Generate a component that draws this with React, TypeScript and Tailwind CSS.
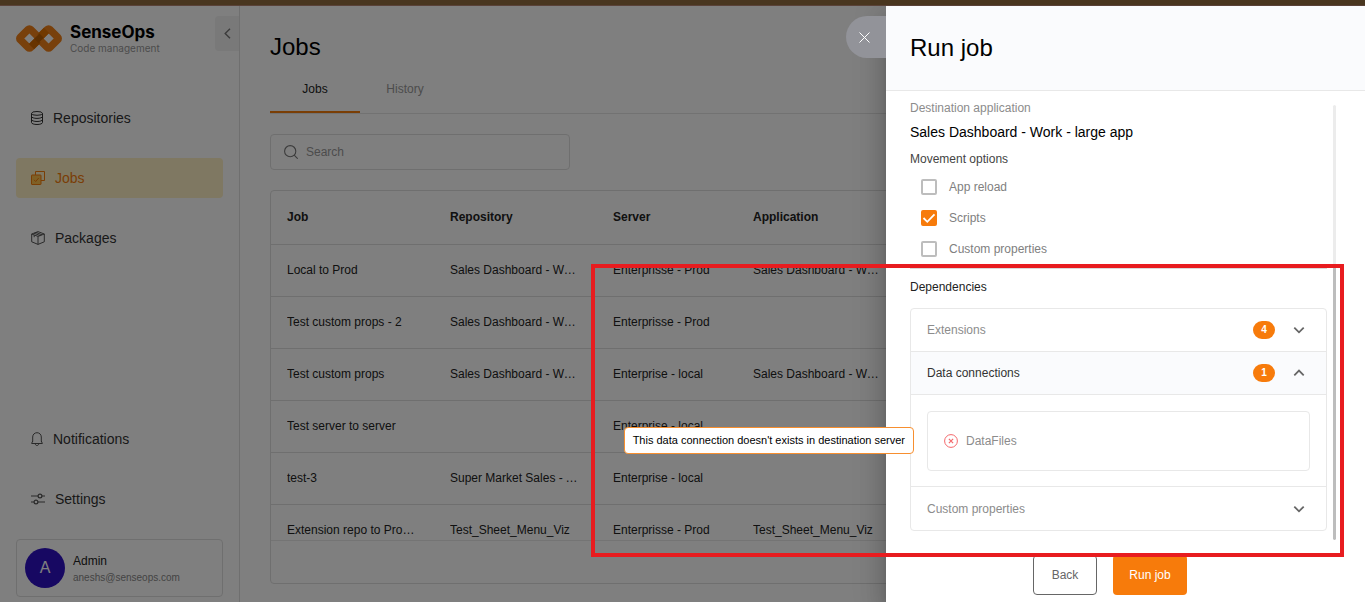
import { useState } from 'react'
import type { ReactNode } from 'react'
import { clsx } from 'clsx'

const jobs = [
  { name: 'Local to Prod', repository: 'Sales Dashboard - Work', server: 'Enterprisse - Prod', application: 'Sales Dashboard - Work' },
  { name: 'Test custom props - 2', repository: 'Sales Dashboard - Work', server: 'Enterprisse - Prod', application: '' },
  { name: 'Test custom props', repository: 'Sales Dashboard - Work', server: 'Enterprise - local', application: 'Sales Dashboard - Work' },
  { name: 'Test server to server', repository: '', server: 'Enterprise - local', application: '' },
  { name: 'test-3', repository: 'Super Market Sales - App', server: 'Enterprise - local', application: '' },
  { name: 'Extension repo to Production', repository: 'Test_Sheet_Menu_Viz', server: 'Enterprisse - Prod', application: 'Test_Sheet_Menu_Viz' },
]

function Logo() {
  return (
    <svg width="46" height="27" viewBox="0 0 46 27" fill="none" strokeWidth="7.4">
      <rect x="6.100" y="6.200" width="14.600" height="14.600" rx="1.600" transform="rotate(45 13.400 13.500)" stroke="#f08018" />
      <rect x="25.300" y="6.200" width="14.600" height="14.600" rx="1.600" transform="rotate(45 32.600 13.500)" stroke="#f08018" />
      <path d="M15.500 21.700 22 15.200" stroke="#d06800" />
      <path d="M24 11.800 30.500 5.300" stroke="#e27200" />
      <path d="M20.900 11.200 25.100 15.400" stroke="#bd5e00" />
    </svg>
  )
}

function DatabaseIcon() {
  return (
    <svg width="12" height="14" viewBox="0 0 12 14" fill="none" stroke="currentColor">
      <ellipse cx="6" cy="2.400" rx="5.500" ry="1.900" />
      <path d="M.5 2.400v9.200c0 1 2.500 1.900 5.500 1.900s5.500-.9 5.500-1.900V2.400M.5 5.500c0 1 2.500 1.900 5.500 1.900s5.500-.9 5.500-1.900M.5 8.600c0 1 2.500 1.900 5.500 1.900s5.500-.9 5.500-1.900" />
    </svg>
  )
}

function JobsIcon() {
  return (
    <svg width="14" height="14" viewBox="0 0 14 14" fill="none" stroke="#f57c0a">
      <path d="M4.500 4V.5h9v9H10" />
      <rect x=".5" y="4" width="9.500" height="9.500" rx=".5" fill="#ffc04d" />
      <path d="m3 8.800 1.700 1.700L7.700 7" />
    </svg>
  )
}

function PackageIcon() {
  return (
    <svg width="14" height="14" viewBox="0 0 14 14" fill="none" stroke="#555" strokeLinejoin="round">
      <path d="M7 .6 13.300 3v7.800L7 13.400.7 10.800V3zM.7 3 7 5.400 13.300 3M7 5.400v8M3 2.200l6.200 2.400M5 1.400l6 2.400M3.200 4v2.200" />
    </svg>
  )
}

function BellIcon() {
  return (
    <svg width="12" height="14" viewBox="0 0 12 14" fill="none" stroke="#555">
      <path d="M.5 11.500h11M1.700 9.500V5C1.700 2.500 3.600.7 6 .7S10.300 2.500 10.300 5v4.500M1.700 9 .7 11.300M10.300 9l1 2.300M4.300 12c.2 1 .8 1.500 1.700 1.500S7.500 13 7.700 12" />
    </svg>
  )
}

function SettingsIcon() {
  return (
    <svg width="14" height="14" viewBox="0 0 14 14" fill="none" stroke="#555" strokeWidth="1.200">
      <path d="M0 4h7M11 4h3M0 10h3M7 10h7" />
      <circle cx="9" cy="4" r="1.900" />
      <circle cx="5" cy="10" r="1.900" />
    </svg>
  )
}

function Chevron({ up }: { up?: boolean }) {
  return (
    <svg width="12" height="8" viewBox="0 0 12 8" fill="none" stroke="#666" strokeWidth="1.800">
      <path d={up ? 'M1.300 6.300 6 1.600l4.700 4.700' : 'M1.300 1.600 6 6.300l4.700-4.700'} />
    </svg>
  )
}

function NavItem({ icon, label, active }: { icon: ReactNode; label: string; active?: boolean }) {
  return (
    <a
      href="#"
      className={clsx(
        'flex h-10 items-center gap-[10px] rounded px-[15px] text-sm',
        active ? 'bg-[#fff0c4] text-[#f57c0a]' : 'text-[#333]',
      )}
    >
      {icon}
      {label}
    </a>
  )
}

function Sidebar() {
  return (
    <aside className="flex w-60 shrink-0 flex-col border-r border-[#dedede] pb-[5px] pl-4">
      <div className="flex items-start justify-between pt-[10px]">
        <div className="flex items-center gap-2 pt-[6px]">
          <Logo />
          <div className="font-['Inter']">
            <div className="text-[17px] leading-5 font-bold text-black">SenseOps</div>
            <div className="text-[10px] leading-3 text-[#999]">Code management</div>
          </div>
        </div>
        <button aria-label="Collapse menu" className="flex h-[35px] w-6 items-center justify-center rounded-l bg-[#f2f2f2]">
          <svg width="7" height="11" viewBox="0 0 7 11" fill="none" stroke="#777" strokeWidth="1.400">
            <path d="M6 .8 1.200 5.500 6 10.200" />
          </svg>
        </button>
      </div>
      <nav className="mt-11 mr-4 flex flex-1 flex-col gap-5">
        <NavItem icon={<DatabaseIcon />} label="Repositories" />
        <NavItem icon={<JobsIcon />} label="Jobs" active />
        <NavItem icon={<PackageIcon />} label="Packages" />
        <div className="mt-auto flex flex-col gap-5">
          <NavItem icon={<BellIcon />} label="Notifications" />
          <NavItem icon={<SettingsIcon />} label="Settings" />
        </div>
      </nav>
      <div className="mt-5 mr-4 flex h-[58px] items-center gap-2 rounded border border-[#dedede] px-2">
        <div className="flex size-10 items-center justify-center rounded-full bg-[#2e10c4] text-base text-white">A</div>
        <div className="pt-[3px]">
          <div className="text-xs leading-4 text-[#222]">Admin</div>
          <div className="text-[10px] leading-[18px] text-[#888]">aneshs@senseops.com</div>
        </div>
      </div>
    </aside>
  )
}

function JobsPage() {
  return (
    <main className="flex min-w-0 flex-1 flex-col px-[30px] pb-[18px]">
      <h1 className="mt-[25px] text-2xl text-black">Jobs</h1>
      <div className="mt-[3px] flex h-12 border-b border-[#e4e4e4]" role="tablist">
        <button role="tab" aria-selected="true" className="h-[47px] w-[90px] border-b-2 border-[#f57c0a] text-xs text-[#222]">
          Jobs
        </button>
        <button role="tab" aria-selected="false" className="h-[47px] w-[90px] border-b-2 border-transparent text-xs text-[#999]">
          History
        </button>
      </div>
      <label className="mt-5 flex h-9 w-[300px] items-center gap-2 rounded border border-[#dedede] px-[13px]">
        <svg width="14" height="14" viewBox="0 0 14 14" fill="none" stroke="#777" strokeWidth="1.100">
          <circle cx="6.200" cy="6.200" r="5.600" />
          <path d="m10.200 10.200 3.500 3.500" />
        </svg>
        <input aria-label="Search" placeholder="Search" className="min-w-0 flex-1 bg-transparent text-xs outline-none placeholder:text-[#999]" />
      </label>
      <div className="mt-5 flex min-h-0 flex-1 flex-col rounded border border-[#dedede]">
        <div className="min-h-0 flex-1 overflow-hidden">
          <table className="w-full table-fixed border-separate border-spacing-0 text-left text-xs text-[#222]">
            <colgroup>
              <col className="w-[163px]" />
              <col className="w-[163px]" />
              <col className="w-[140px]" />
              <col />
            </colgroup>
            <thead>
              <tr className="h-[54px]">
                {['Job', 'Repository', 'Server', 'Application'].map(title => (
                  <th key={title} className="border-b border-[#dedede] px-4 pb-[2px] font-bold">{title}</th>
                ))}
              </tr>
            </thead>
            <tbody>
              {jobs.map(job => (
                <tr key={job.name} className="h-[52px]">
                  {[job.name, job.repository, job.server, job.application].map((value, i) => (
                    <td key={i} className="border-b border-[#dedede] pb-[2px] pl-4">
                      <div className="max-w-32 truncate">{value}</div>
                    </td>
                  ))}
                </tr>
              ))}
            </tbody>
          </table>
        </div>
        <div className="h-[43px] shrink-0 border-t border-[#e8e8e8]" />
      </div>
    </main>
  )
}

function Option({ label, checked, onChange }: { label: string; checked: boolean; onChange: () => void }) {
  return (
    <label className="flex h-[31px] items-center gap-3 text-xs text-[#808080]">
      <span className="relative flex size-4">
        <input
          type="checkbox"
          checked={checked}
          onChange={onChange}
          className="size-4 appearance-none rounded-[2px] border-2 border-[#bdbdbd] bg-white checked:border-[#f77b0b] checked:bg-[#f77b0b]"
        />
        {checked && (
          <svg className="pointer-events-none absolute inset-0" width="16" height="16" viewBox="0 0 16 16" fill="none" stroke="#fff" strokeWidth="1.800">
            <path d="m2.500 8 3.800 3.800 7.200-7.500" />
          </svg>
        )}
      </span>
      {label}
    </label>
  )
}

function SectionHeader({ title, count, open }: { title: string; count?: number; open?: boolean }) {
  return (
    <button
      aria-expanded={!!open}
      className={clsx('flex h-[43px] w-full items-center px-4 text-xs', open ? 'bg-[#fafbfd] text-[#333]' : 'text-[#8c8c8c]')}
    >
      <span className="flex-1 text-left">{title}</span>
      {count !== undefined && (
        <span className="mr-[18px] flex h-[18px] w-[22px] items-center justify-center rounded-full bg-[#f77b0b] text-[10px] font-bold text-white">
          {count}
        </span>
      )}
      <span className="mr-[5px]">
        <Chevron up={open} />
      </span>
    </button>
  )
}

function RunJobDrawer() {
  const [options, setOptions] = useState({ 'App reload': false, Scripts: true, 'Custom properties': false })

  function toggle(key: keyof typeof options) {
    setOptions(prev => ({ ...prev, [key]: !prev[key] }))
  }

  return (
    <section
      aria-label="Run job"
      className="absolute inset-y-0 right-0 flex w-[479px] flex-col bg-white shadow-[0_8px_10px_-5px_rgba(0,0,0,0.2),0_16px_24px_2px_rgba(0,0,0,0.14),0_6px_30px_5px_rgba(0,0,0,0.12)]"
    >
      <button aria-label="Close" className="absolute top-[10px] right-full flex h-[42px] w-10 items-center rounded-l-full bg-[#929399] pl-[13px]">
        <svg width="11" height="11" viewBox="0 0 11 11" stroke="#fff">
          <path d="m.5.5 10 10M10.500.5l-10 10" />
        </svg>
      </button>
      <header className="flex h-[85px] shrink-0 items-center border-b border-[#e8e8e8] bg-[#fafbfd] px-6">
        <h2 className="text-2xl text-black">Run job</h2>
      </header>

      <div className="mt-2 mr-[29px] flex min-h-0 flex-1">
        <div className="min-w-0 flex-1 overflow-hidden pt-px pr-[6px] pl-6">
          <div className="text-xs leading-4 text-[#8c8c8c]">Destination application</div>
          <div className="mt-[6px] text-sm text-black">Sales Dashboard - Work - large app</div>
          <fieldset>
            <legend className="pt-[9px] text-xs leading-4 text-[#444]">Movement options</legend>
            <div className="mt-1 pl-[11px]">
              {(Object.keys(options) as (keyof typeof options)[]).map(key => (
                <Option key={key} label={key} checked={options[key]} onChange={() => toggle(key)} />
              ))}
            </div>
          </fieldset>
          <hr className="mt-1 border-[#d9d9d9]" />
          <h3 className="mt-[10px] text-xs leading-4 text-[#222]">Dependencies</h3>
          <div className="mt-[13px] divide-y divide-[#e8e8e8] rounded border border-[#e8e8e8]">
            <SectionHeader title="Extensions" count={4} />
            <SectionHeader title="Data connections" count={1} open />
            <div className="px-4 pt-4 pb-[15px]">
              <div className="flex h-[60px] items-center gap-2 rounded border border-[#e8e8e8] px-4 text-xs text-[#8c8c8c]">
                <svg width="14" height="14" viewBox="0 0 14 14" fill="none" stroke="#f4686b">
                  <circle cx="7" cy="7" r="6.400" />
                  <path d="m4.900 4.900 4.200 4.200M9.100 4.900 4.900 9.100" strokeWidth="1.200" />
                </svg>
                DataFiles
              </div>
            </div>
            <SectionHeader title="Custom properties" />
          </div>
        </div>
        <div className="mt-[6px] flex w-[3px] flex-col overflow-hidden rounded-full bg-[#ececec]">
          <div className="mt-auto h-[63%] rounded-full bg-[#bdbdbd]" />
        </div>
      </div>

      <footer className="mt-[15px] mr-[31px] mb-[7px] flex shrink-0 justify-center gap-4">
        <button className="h-10 w-16 rounded border border-[#666] text-xs text-[#666]">Back</button>
        <button className="h-10 w-[74px] rounded bg-[#f77b0b] text-xs text-white">Run job</button>
      </footer>

      <div role="tooltip" className="absolute top-[421px] right-[451px] flex h-[27px] items-center rounded border border-[#f78f2f] bg-white px-2 text-[11px] whitespace-nowrap text-black">
        This data connection doesn't exists in destination server
      </div>
      <div className="pointer-events-none absolute top-[258px] right-[21px] h-[293px] w-[753px] border-4 border-[#e81c1f]" />
    </section>
  )
}

export default function App() {
  return (
    <div className="flex h-screen flex-col overflow-hidden bg-white font-['Liberation_Sans',Arial,sans-serif]">
      <div className="relative z-10 h-[6px] shrink-0 border-b border-[#5a4238] bg-[#49361f]" />
      <div className="relative flex min-h-0 flex-1">
        <Sidebar />
        <JobsPage />
        <div className="absolute inset-0 bg-black/50" />
        <RunJobDrawer />
      </div>
    </div>
  )
}
